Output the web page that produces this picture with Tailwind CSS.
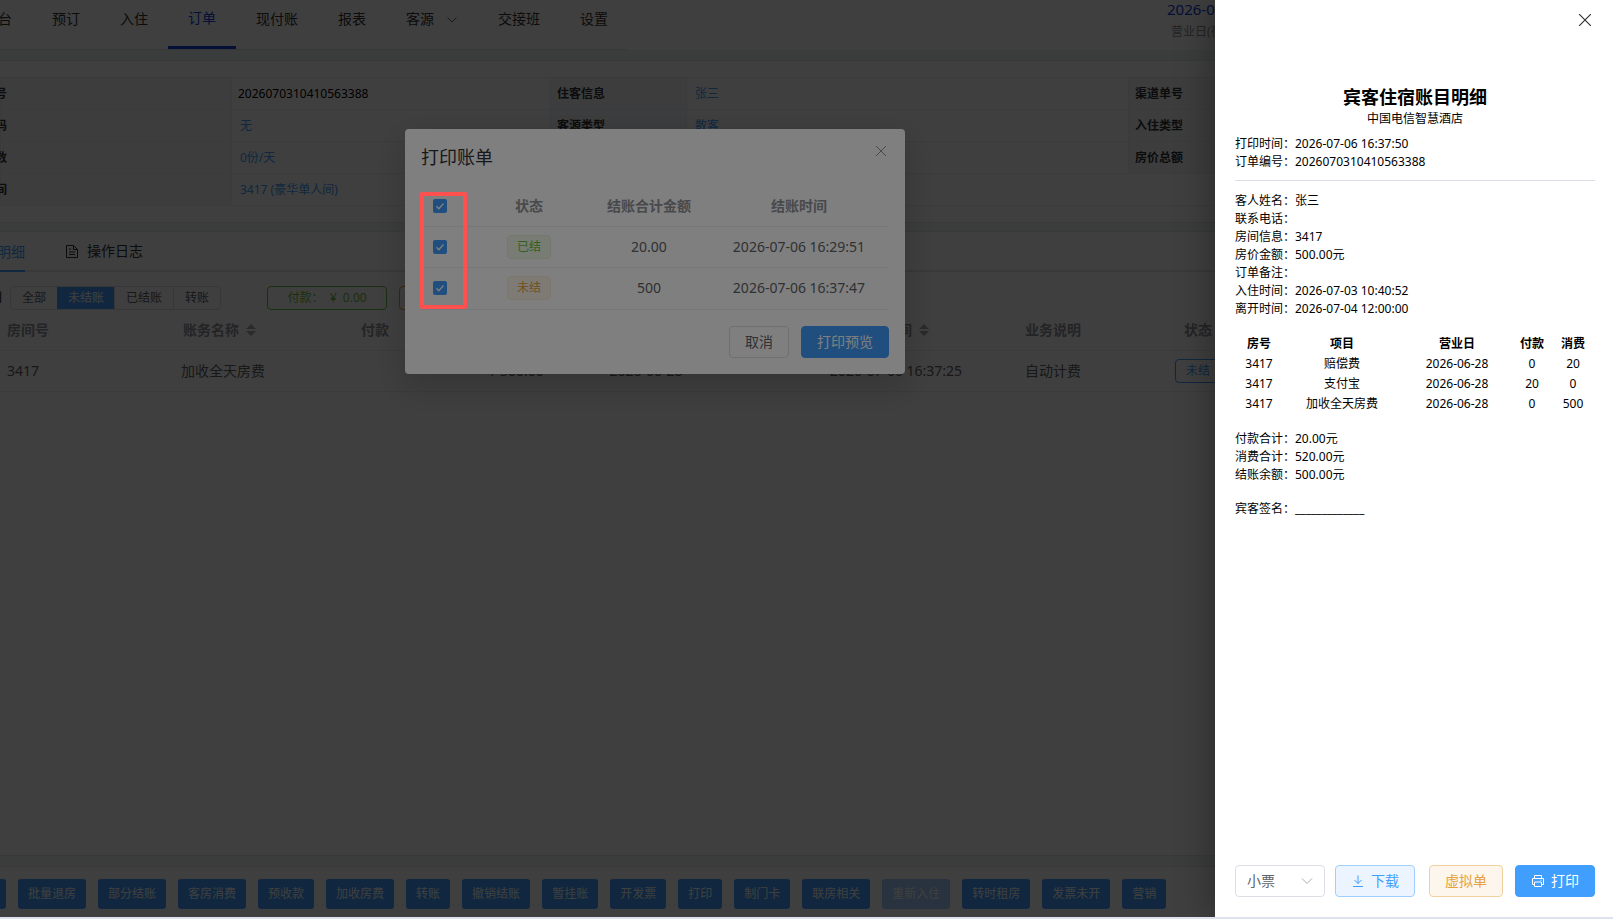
<!DOCTYPE html>
<html lang="zh-CN">
<head>
  <meta charset="UTF-8">
  <meta name="viewport" content="width=device-width, initial-scale=1.0">
  <title>打印账单</title>
  <script src="https://cdn.jsdelivr.net/npm/@tailwindcss/browser@4"></script>
</head>
<body class="h-screen overflow-hidden bg-[#dde3ee] pb-0.5 font-['Noto_Sans','Noto_Sans_CJK_SC',sans-serif] text-sm text-[#303133]">
  <div class="relative h-full overflow-hidden">

    <!-- Order page -->
    <div class="flex h-full flex-col bg-[#eff3f2]">
      <header class="flex h-[50px] shrink-0 justify-between bg-white">
        <nav class="-ml-9 flex border-b border-[#dcdfe6] leading-[38px]">
          <a href="#" class="px-5">前台</a>
          <a href="#" class="px-5">预订</a>
          <a href="#" class="px-5">入住</a>
          <a href="#" class="border-b-[3px] border-[#1040d8] px-5 leading-[36px] text-[#1040d8]">订单</a>
          <a href="#" class="px-5">现付账</a>
          <a href="#" class="px-5">报表</a>
          <a href="#" class="flex gap-3 px-5">客源
            <svg class="mt-3.5 size-3" viewBox="0 0 12 12" fill="none" stroke="#606266"><path d="M1.500 3.500 6 8l4.500-4.500"/></svg>
          </a>
          <a href="#" class="px-5">交接班</a>
          <a href="#" class="px-5">设置</a>
        </nav>
        <div class="w-[446px] whitespace-nowrap">
          <p class="text-[15px] leading-[18px] text-[#1040d8]">2026-07-06 16:37:50</p>
          <p class="pl-1 text-xs leading-7 text-[#909399]">营业日(夜审后): 2026-06-28</p>
        </div>
      </header>

      <section class="mt-2.5 shrink-0 border-y border-[#e4e7ed] bg-white py-4">
        <table class="w-full table-fixed border-collapse text-xs leading-4">
          <colgroup>
            <col class="w-[231px]"><col class="w-[319px]"><col class="w-[136px]"><col class="w-[442px]"><col class="w-[136px]"><col>
          </colgroup>
          <tbody>
            <tr class="h-8 border border-[#ebeef5]">
              <th class="border-r border-[#ebeef5] bg-[#f5f7fa] text-left"><span class="-ml-[42px]">订单编号</span></th>
              <td class="border-r border-[#ebeef5] px-1.5 text-black">2026070310410563388</td>
              <th class="border-r border-[#ebeef5] bg-[#f5f7fa] px-1.5 text-left">住客信息</th>
              <td class="border-r border-[#ebeef5] px-1.5"><a href="#" class="ml-0.5 text-[#409eff]">张三</a></td>
              <th class="border-r border-[#ebeef5] bg-[#f5f7fa] px-1.5 text-left">渠道单号</th>
              <td></td>
            </tr>
            <tr class="h-8 border border-[#ebeef5]">
              <th class="border-r border-[#ebeef5] bg-[#f5f7fa] text-left"><span class="-ml-[42px]">手机号码</span></th>
              <td class="border-r border-[#ebeef5] px-1.5"><a href="#" class="ml-0.5 text-[#409eff]">无</a></td>
              <th class="border-r border-[#ebeef5] bg-[#f5f7fa] px-1.5 text-left">客源类型</th>
              <td class="border-r border-[#ebeef5] px-1.5"><a href="#" class="ml-0.5 text-[#409eff]">散客</a></td>
              <th class="border-r border-[#ebeef5] bg-[#f5f7fa] px-1.5 text-left">入住类型</th>
              <td></td>
            </tr>
            <tr class="h-8 border border-[#ebeef5]">
              <th class="border-r border-[#ebeef5] bg-[#f5f7fa] text-left"><span class="-ml-[42px]">早餐份数</span></th>
              <td class="border-r border-[#ebeef5] px-1.5"><a href="#" class="ml-0.5 text-[#409eff]">0份/天</a></td>
              <th class="border-r border-[#ebeef5] bg-[#f5f7fa]"></th>
              <td class="border-r border-[#ebeef5]"></td>
              <th class="border-r border-[#ebeef5] bg-[#f5f7fa] px-1.5 text-left">房价总额</th>
              <td></td>
            </tr>
            <tr class="h-8 border border-[#ebeef5]">
              <th class="border-r border-[#ebeef5] bg-[#f5f7fa] text-left"><span class="-ml-[42px]">入住房间</span></th>
              <td colspan="5" class="px-1.5"><a href="#" class="ml-0.5 text-[#409eff]">3417 (豪华单人间)</a></td>
            </tr>
          </tbody>
        </table>
      </section>

      <section class="mt-2 flex-1 border-y border-[#e4e7ed] bg-white">
        <div class="flex h-10 gap-10 border-b-2 border-[#e4e7ed] leading-[40px]">
          <a href="#" class="-mb-0.5 -ml-[31px] border-b-2 border-[#409eff] text-[#409eff]">账务明细</a>
          <a href="#" class="flex items-center gap-2">
            <svg class="size-3.5" viewBox="0 0 14 14" fill="none" stroke="currentColor"><path d="M1.500 1.500h7l4 4v8h-11zM8.500 1.500v4h4M4 5h2M4 8h6M4 10.500h6"/></svg>
            操作日志
          </a>
        </div>

        <div class="flex items-center pt-3.5 text-xs leading-[22px]">
          <span class="-ml-[22px] mr-2 text-black">类别</span>
          <div class="flex rounded border border-[#dcdfe6] text-[#606266]">
            <label class="px-[11px]"><input type="radio" name="state" class="sr-only">全部</label>
            <label class="border-l border-[#409eff] bg-[#409eff] px-2.5 text-white"><input type="radio" name="state" class="sr-only" checked>未结账</label>
            <label class="border-l border-[#dcdfe6] px-[11px]"><input type="radio" name="state" class="sr-only">已结账</label>
            <label class="border-l border-[#dcdfe6] px-[11px]"><input type="radio" name="state" class="sr-only">转账</label>
          </div>
          <span class="ml-[46px] w-[120px] rounded border border-[#67c23a] text-center text-[#67c23a]">付款：&nbsp; ¥&nbsp; 0.00</span>
          <span class="ml-3 w-[120px] rounded border border-[#e6a23c] text-center text-[#e6a23c]">消费：&nbsp; ¥&nbsp; 500.00</span>
        </div>

        <table class="w-full table-fixed border-collapse text-[#606266]">
          <colgroup>
            <col class="w-[123px]"><col class="w-[200px]"><col class="w-[104px]"><col class="w-[178px]"><col class="w-[82px]"><col class="w-[305px]"><col class="w-[122px]"><col class="w-[168px]"><col>
          </colgroup>
          <thead>
            <tr class="h-10 border-b border-[#ebeef5] text-[#909399]">
              <th class="pl-[7px] text-left">房间号</th>
              <th>
                <span class="inline-flex items-center">账务名称
                  <svg class="mx-[7px] h-3 w-2.5" viewBox="0 0 10 12" fill="#a8abb2"><path d="M0 5 5 0l5 5zM0 7h10l-5 5z"/></svg>
                </span>
              </th>
              <th>付款</th>
              <th>消费</th>
              <th>营业日</th>
              <th class="pl-[113px]">
                <span class="inline-flex items-center">入账时间
                  <svg class="mx-[7px] h-3 w-2.5" viewBox="0 0 10 12" fill="#a8abb2"><path d="M0 5 5 0l5 5zM0 7h10l-5 5z"/></svg>
                </span>
              </th>
              <th>业务说明</th>
              <th>状态</th>
              <th></th>
            </tr>
          </thead>
          <tbody>
            <tr class="h-[41px] border-b border-[#ebeef5] text-center">
              <td class="pl-[7px] text-left">3417</td>
              <td>加收全天房费</td>
              <td></td>
              <td>¥ 500.00</td>
              <td>2026-06-28</td>
              <td class="pl-[113px]">2026-07-06 16:37:25</td>
              <td>自动计费</td>
              <td><span class="inline-block rounded border border-[#409eff] px-2.5 align-middle text-xs leading-[22px] text-[#409eff]">未结</span></td>
              <td></td>
            </tr>
          </tbody>
        </table>
      </section>

      <footer class="mt-2.5 flex shrink-0 gap-3 border-t border-[#e4e7ed] bg-white pt-3 pb-2 text-xs leading-[30px] whitespace-nowrap text-white">
        <button class="-ml-[38px] rounded-[3px] bg-[#409eff] px-2.5">退房</button>
        <button class="rounded-[3px] bg-[#409eff] px-2.5">批量退房</button>
        <button class="rounded-[3px] bg-[#409eff] px-2.5">部分结账</button>
        <button class="rounded-[3px] bg-[#409eff] px-2.5">客房消费</button>
        <button class="rounded-[3px] bg-[#409eff] px-2.5">预收款</button>
        <button class="rounded-[3px] bg-[#409eff] px-2.5">加收房费</button>
        <button class="rounded-[3px] bg-[#409eff] px-2.5">转账</button>
        <button class="rounded-[3px] bg-[#409eff] px-2.5">撤销结账</button>
        <button class="rounded-[3px] bg-[#409eff] px-2.5">暂挂账</button>
        <button class="rounded-[3px] bg-[#409eff] px-2.5">开发票</button>
        <button class="rounded-[3px] bg-[#409eff] px-2.5">打印</button>
        <button class="rounded-[3px] bg-[#409eff] px-2.5">制门卡</button>
        <button class="rounded-[3px] bg-[#409eff] px-2.5">联房相关</button>
        <button class="rounded-[3px] bg-[#a0cfff] px-2.5" disabled>重新入住</button>
        <button class="rounded-[3px] bg-[#409eff] px-2.5">转时租房</button>
        <button class="rounded-[3px] bg-[#409eff] px-2.5">发票未开</button>
        <button class="rounded-[3px] bg-[#409eff] px-2.5">营销</button>
      </footer>
    </div>

    <!-- Bill dialog -->
    <div class="absolute inset-0 bg-black/50">
      <div role="dialog" aria-label="打印账单" class="absolute top-[129px] left-[405px] w-[500px] rounded bg-white p-4 shadow-[0_12px_32px_4px_rgba(0,0,0,0.15)]">
        <div class="flex h-[41px] justify-between">
          <h2 class="text-lg leading-6">打印账单</h2>
          <button aria-label="关闭" class="mr-0.5 size-3 text-[#909399]">
            <svg viewBox="0 0 12 12" fill="none" stroke="currentColor"><path d="m1 1 10 10M11 1 1 11"/></svg>
          </button>
        </div>
        <table class="w-full table-fixed border-collapse text-center text-[#606266]">
          <colgroup>
            <col class="w-12"><col class="w-[120px]"><col class="w-[120px]"><col>
          </colgroup>
          <thead>
            <tr class="h-10 border-b border-[#ebeef5] text-[#909399]">
              <th class="pl-3">
                <label class="grid size-3.5">
                  <input type="checkbox" checked aria-label="全选" class="col-start-1 row-start-1 size-3.5 appearance-none rounded-xs bg-[#409eff]">
                  <svg class="col-start-1 row-start-1 size-3.5" viewBox="0 0 14 14" fill="none" stroke="#fff" stroke-width="1.300"><path d="m3.500 7.200 2.300 2.500 4.700-5.200"/></svg>
                </label>
              </th>
              <th>状态</th>
              <th>结账合计金额</th>
              <th>结账时间</th>
            </tr>
          </thead>
          <tbody>
            <tr class="h-[41px] border-b border-[#ebeef5]">
              <td class="pl-3">
                <label class="grid size-3.5">
                  <input type="checkbox" checked aria-label="选择已结账单" class="col-start-1 row-start-1 size-3.5 appearance-none rounded-xs bg-[#409eff]">
                  <svg class="col-start-1 row-start-1 size-3.5" viewBox="0 0 14 14" fill="none" stroke="#fff" stroke-width="1.300"><path d="m3.500 7.200 2.300 2.500 4.700-5.200"/></svg>
                </label>
              </td>
              <td><span class="inline-block rounded border border-[#e1f3d8] bg-[#f0f9eb] px-[9px] align-middle text-xs leading-[22px] text-[#67c23a]">已结</span></td>
              <td>20.00</td>
              <td>2026-07-06 16:29:51</td>
            </tr>
            <tr class="h-[42px] border-b border-[#ebeef5]">
              <td class="pl-3">
                <label class="grid size-3.5">
                  <input type="checkbox" checked aria-label="选择未结账单" class="col-start-1 row-start-1 size-3.5 appearance-none rounded-xs bg-[#409eff]">
                  <svg class="col-start-1 row-start-1 size-3.5" viewBox="0 0 14 14" fill="none" stroke="#fff" stroke-width="1.300"><path d="m3.500 7.200 2.300 2.500 4.700-5.200"/></svg>
                </label>
              </td>
              <td><span class="inline-block rounded border border-[#faecd8] bg-[#fdf6ec] px-[9px] align-middle text-xs leading-[22px] text-[#e6a23c]">未结</span></td>
              <td>500</td>
              <td>2026-07-06 16:37:47</td>
            </tr>
          </tbody>
        </table>
        <div class="mt-4 flex justify-end gap-3 leading-[30px]">
          <button class="rounded border border-[#dcdfe6] px-[15px] text-[#606266]">取消</button>
          <button class="rounded border border-[#409eff] bg-[#409eff] px-[15px] text-white">打印预览</button>
        </div>
      </div>
    </div>

    <!-- Receipt drawer -->
    <div class="absolute inset-0 flex justify-end bg-black/50">
      <aside class="flex w-[398px] flex-col bg-white pr-[18px] pb-5 pl-5 text-xs leading-[18px] text-black shadow-[-8px_0_30px_rgba(0,0,0,0.25)]">
        <div class="flex h-[84px] justify-end pt-3.5">
          <button aria-label="关闭" class="mr-1 size-3 text-[#303133]">
            <svg viewBox="0 0 12 12" fill="none" stroke="currentColor" stroke-width="1.200"><path d="m0 0 12 12M12 0 0 12"/></svg>
          </button>
        </div>
        <h1 class="text-center text-lg leading-[26px] font-bold">宾客住宿账目明细</h1>
        <p class="text-center">中国电信智慧酒店</p>
        <div class="mt-[7px] border-b border-[#dcdfe6] pb-[9px]">
          <p>打印时间：2026-07-06 16:37:50</p>
          <p>订单编号：2026070310410563388</p>
        </div>
        <div class="mt-[11px]">
          <p>客人姓名：张三</p>
          <p>联系电话：</p>
          <p>房间信息：3417</p>
          <p>房价金额：500.00元</p>
          <p>订单备注：</p>
          <p>入住时间：2026-07-03 10:40:52</p>
          <p>离开时间：2026-07-04 12:00:00</p>
        </div>
        <table class="mt-4 w-full table-fixed text-center">
          <colgroup>
            <col class="w-12"><col class="w-[118px]"><col class="w-[112px]"><col class="w-[38px]"><col>
          </colgroup>
          <thead>
            <tr class="h-5"><th>房号</th><th>项目</th><th>营业日</th><th>付款</th><th>消费</th></tr>
          </thead>
          <tbody>
            <tr class="h-5"><td>3417</td><td>赔偿费</td><td>2026-06-28</td><td>0</td><td>20</td></tr>
            <tr class="h-5"><td>3417</td><td>支付宝</td><td>2026-06-28</td><td>20</td><td>0</td></tr>
            <tr class="h-5"><td>3417</td><td>加收全天房费</td><td>2026-06-28</td><td>0</td><td>500</td></tr>
          </tbody>
        </table>
        <div class="mt-4">
          <p>付款合计：20.00元</p>
          <p>消费合计：520.00元</p>
          <p>结账余额：500.00元</p>
        </div>
        <p class="mt-4">宾客签名：_____________</p>

        <div class="mt-auto flex text-sm leading-[30px]">
          <div class="relative mr-2.5 w-[90px]">
            <select aria-label="打印模板" class="h-8 w-full appearance-none rounded border border-[#dcdfe6] pl-[11px] text-[#606266]">
              <option>小票</option>
            </select>
            <svg class="pointer-events-none absolute top-2.5 right-3 size-3" viewBox="0 0 12 12" fill="none" stroke="#a8abb2"><path d="M1 3.500 6 8.500l5-5"/></svg>
          </div>
          <button class="mr-3.5 flex w-20 items-center justify-center gap-1.5 rounded border border-[#a0cfff] bg-[#ecf5ff] text-[#409eff]">
            <svg class="size-3.5" viewBox="0 0 14 14" fill="none" stroke="currentColor"><path d="M7 1.500v8M3.500 6 7 9.500 10.500 6M2 12.500h10"/></svg>
            下载
          </button>
          <button class="mr-3 rounded border border-[#f3d19e] bg-[#fdf6ec] px-[15px] text-[#e6a23c]">虚拟单</button>
          <button class="flex w-20 items-center justify-center gap-1.5 rounded border border-[#409eff] bg-[#409eff] text-white">
            <svg class="size-3.5" viewBox="0 0 14 14" fill="none" stroke="currentColor"><path d="M3.500 4V1.500h7V4M3.500 10.500h-2V4.500h11v6h-2M3.500 8h7v4.500h-7zM9.500 6.200h1"/></svg>
            打印
          </button>
        </div>
      </aside>
    </div>

    <!-- Highlight around the checkboxes -->
    <div class="pointer-events-none absolute top-48 left-[420px] h-[117px] w-[47px] rounded-xs border-4 border-[#ff5050]"></div>
  </div>
</body>
</html>
